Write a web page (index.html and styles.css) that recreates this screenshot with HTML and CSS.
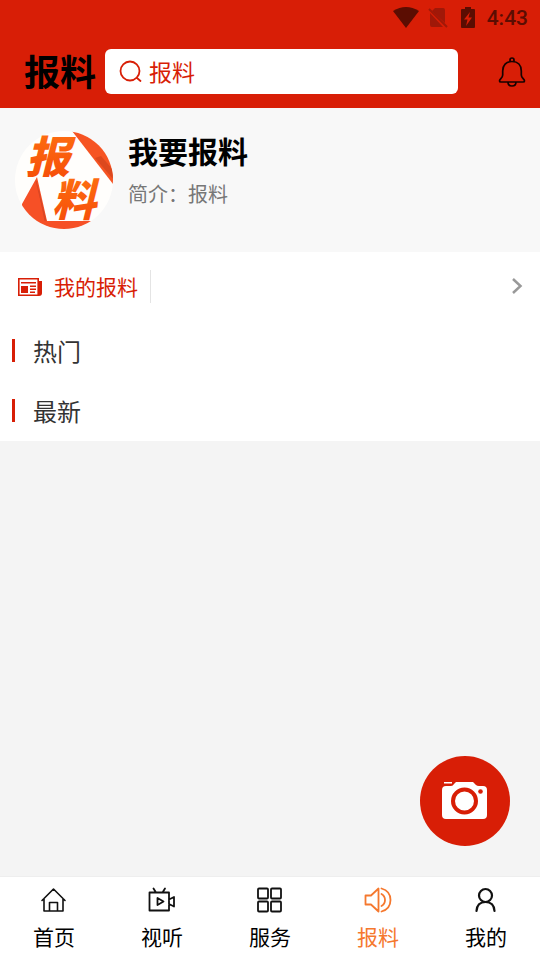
FILE: index.html
```html
<!DOCTYPE html>
<html lang="zh-CN">
<head>
<meta charset="utf-8">
<meta name="viewport" content="width=device-width, initial-scale=1">
<title>报料</title>
<link rel="stylesheet" href="styles.css">
</head>
<body>
<header class="header">
  <div class="status">
    <svg width="26" height="22" viewBox="0 0 26 22" fill="#5b0d02"><path d="M0 4Q13-4 26 4L13 21Z"/></svg>
    <svg class="sim" width="20" height="22" viewBox="0 0 20 22"><path d="M7 1H15Q17 1 17 3V16L4 4ZM2 6L15 20H4Q2 20 2 18Z" fill="#a01808"/><path d="M1 2L19 20" stroke="#a01808" stroke-width="2"/></svg>
    <svg class="battery" width="14" height="22" viewBox="0 0 14 22"><path d="M4 0H10V2H13Q14 2 14 3V20Q14 21 13 21H1Q0 21 0 20V3Q0 2 1 2H4Z" fill="#5b0d02"/><path d="M9 5L3 12.500H6.500L5 19 11 10.500H7.500Z" fill="#d81e06"/></svg>
    <time class="clock">4:43</time>
  </div>
  <div class="bar">
    <h1 class="brand">报料</h1>
    <label class="search">
      <svg width="24" height="24" viewBox="0 0 24 24" fill="none" stroke="#d81e06" stroke-width="1.800" stroke-linecap="round"><circle cx="11" cy="11" r="9.500"/><path d="M18 18L21.500 21"/></svg>
      <input class="search-input" type="text" value="报料" aria-label="搜索">
    </label>
    <button class="bell" type="button" aria-label="通知">
      <svg width="28" height="30" viewBox="0 0 28 30" fill="none" stroke="#160200" stroke-width="1.700" stroke-linejoin="round"><path d="M12 5V3Q12 1 14 1T16 3V5M14 4.500C8 4.500 4.700 8.500 4.700 14V18C4.700 21 1.500 22 1.500 24Q1.500 25 3 25H25Q26.500 25 26.500 24C26.500 22 23.300 21 23.300 18V14C23.300 8.500 20 4.500 14 4.500ZM10 25Q10 29 14 29T18 25"/></svg>
    </button>
  </div>
</header>
<main class="main">
  <section class="profile">
    <svg class="avatar" viewBox="0 0 98 98" role="img" aria-label="报料">
      <defs>
        <clipPath id="round"><circle cx="49" cy="49" r="49"/></clipPath>
        <linearGradient id="ink" x1="0" y1="0" x2="0" y2="1"><stop offset="0" stop-color="#ff7412"/><stop offset="1" stop-color="#f54a08"/></linearGradient>
      </defs>
      <g clip-path="url(#round)">
        <path d="M0 0H98V98H0Z" fill="#fffefc"/>
        <path d="M57 0L98 53V0Z" fill="#f65423"/>
        <path d="M80 27L86 25 98 39V48Z" fill="#dc481e"/>
        <path d="M22 46L7 73V98H98V90H32Z" fill="#f65026"/>
        <path d="M21 50L31 90M24 60L30 90" stroke="#d94725" fill="none"/>
      </g>
      <g class="avatar-text"><text x="11" y="42">报</text><text x="37" y="85">料</text></g>
    </svg>
    <div>
      <h2 class="name">我要报料</h2>
      <p class="intro">简介：报料</p>
    </div>
  </section>
  <section class="list">
    <a class="mine" href="#mine">
      <svg width="24" height="18" viewBox="0 0 24 18"><path d="M20 3H24V15Q24 18 21 18H18Z" fill="#d81e06"/><path d="M.8.800H20.200V17.200H.8Z" fill="#fff" stroke="#d81e06" stroke-width="1.600"/><path d="M3 8H10V15H3ZM3 4H18V5.500H3ZM12 7.500H18V9H12ZM12 10.500H18V12H12ZM12 13.500H17V15H12Z" fill="#d81e06"/></svg>
      <span class="mine-label">我的报料</span>
      <svg class="chevron" width="12" height="18" viewBox="0 0 12 18" fill="none" stroke="#999" stroke-width="2.500"><path d="M2 1L9.500 8 2 15"/></svg>
    </a>
    <h3 class="heading">热门</h3>
    <h3 class="heading">最新</h3>
  </section>
</main>
<button class="camera" type="button" aria-label="拍照报料">
  <svg width="46" height="38" viewBox="0 0 46 38"><path d="M2 0H10V1.500H2ZM4 4H9Q11 4 12 2L14 0H31L34 3Q35 4 37 4H41Q45 4 45 8V33Q45 37 41 37H4Q0 37 0 33V8Q0 4 4 4Z" fill="#fff"/><circle cx="22.500" cy="19" r="11.500" fill="none" stroke="#d81e06" stroke-width="4"/><circle cx="38.500" cy="9.500" r="2.300" fill="#d81e06"/></svg>
</button>
<nav class="tabs">
  <a class="tab" href="#home"><svg width="28" height="28" viewBox="0 0 28 28" fill="none" stroke="#111" stroke-width="1.600" stroke-linejoin="round" stroke-linecap="round"><path d="M2 14.500L13.500 3 25 14.500M4 12.500V25H23V12.500M9.500 25V16.500H17.500V25"/></svg>首页</a>
  <a class="tab" href="#video"><svg width="28" height="28" viewBox="0 0 28 28" fill="none" stroke="#111" stroke-width="1.800" stroke-linejoin="round" stroke-linecap="round"><path d="M1.500 6.500H21V24.500H1.500ZM5.500 2.500L8 6.500M17 2.500L14.500 6.500M9.500 12V19L15.500 15.500ZM21 13.500L26 11V20.500L21 18"/></svg>视听</a>
  <a class="tab" href="#service"><svg width="28" height="28" viewBox="0 0 28 28" fill="none" stroke="#111" stroke-width="1.800"><rect x="2" y="2.500" width="10" height="10" rx="1"/><rect x="15" y="2.500" width="10" height="10" rx="1"/><rect x="2" y="15.500" width="10" height="10" rx="1"/><rect x="15" y="15.500" width="10" height="10" rx="1"/></svg>服务</a>
  <a class="tab active" href="#report" aria-current="page"><svg width="28" height="28" viewBox="0 0 28 28" fill="none" stroke="#f5782e" stroke-width="1.800" stroke-linejoin="round" stroke-linecap="round"><path d="M1.500 9.500H7L14.500 2.500V25.500L7 18.500H1.500ZM17.500 8Q21 10 21 14T17.500 20M17.500 2.500Q26.500 5 26.500 14T17.500 25.500"/></svg>报料</a>
  <a class="tab" href="#me"><svg width="28" height="28" viewBox="0 0 28 28" fill="none" stroke="#111" stroke-width="2.200" stroke-linecap="round"><circle cx="13.500" cy="9.500" r="6.500"/><path d="M4.500 25Q5 16 13.500 16T22.500 25"/></svg>我的</a>
</nav>
</body>
</html>
```
FILE: styles.css
```css
* { box-sizing: border-box; }

body {
  margin: 0;
  min-height: 100vh;
  display: flex;
  flex-direction: column;
  background: #f4f4f4;
  color: #000;
  font-family: "Noto Sans CJK SC", sans-serif;
}

h1, h2, h3, p { margin: 0; }
a { color: inherit; text-decoration: none; }
svg { display: block; flex: none; }
button { border: 0; padding: 0; cursor: pointer; }

.header { background: #d81e06; padding-bottom: 14px; }

.status {
  height: 36px;
  padding-right: 12px;
  display: flex;
  justify-content: flex-end;
  align-items: center;
}
.sim { margin-left: 9px; }
.battery { margin: 0 12px 0 13px; }
.clock {
  color: #5b0d02;
  font: 500 21px/24px Roboto, sans-serif;
}

.bar {
  display: flex;
  align-items: center;
  margin-top: 13px;
  padding: 0 14px 0 24px;
}
.brand { padding-bottom: 3px; font-size: 36px; line-height: 42px; }
.search {
  flex: 1;
  min-width: 0;
  height: 45px;
  margin: 0 40px 0 9px;
  padding: 0 14px;
  display: flex;
  align-items: center;
  gap: 6px;
  background: #fff;
  border-radius: 6px;
}
.search-input {
  flex: 1;
  min-width: 0;
  border: 0;
  padding: 0 0 2px;
  outline: 0;
  background: none;
  color: #d81e06;
  font: 23px/34px "Noto Sans CJK SC", sans-serif;
}
.bell { background: none; }

.main { flex: 1; }

.profile {
  display: flex;
  gap: 15px;
  padding: 23px 15px;
  background: #f8f8f8;
}
.avatar { width: 98px; height: 98px; overflow: visible; }
.avatar-text {
  font-size: 44px;
  font-weight: 900;
  font-style: italic;
  fill: url(#ink);
}
.name { font-size: 30px; line-height: 38px; }
.intro { margin-top: 10px; font-size: 20px; line-height: 30px; color: #777; }

.list { background: #fff; }
.mine {
  height: 69px;
  padding: 0 17px 0 18px;
  display: flex;
  align-items: center;
  color: #d81e06;
}
.mine-label {
  margin-left: 12px;
  padding-right: 12px;
  border-right: 1px solid #e4e4e4;
  font-size: 21px;
  line-height: 33px;
}
.chevron { margin-left: auto; }

.heading {
  display: flex;
  align-items: center;
  gap: 18px;
  height: 60px;
  padding: 0 12px 2px;
  color: #333;
  font-size: 24px;
  font-weight: 400;
}
.heading::before {
  content: "";
  width: 3px;
  height: 23px;
  background: #d81e06;
}

.camera {
  position: fixed;
  right: 30px;
  bottom: 114px;
  width: 90px;
  height: 90px;
  border-radius: 50%;
  background: #d81e06;
  display: grid;
  place-items: center;
}

.tabs {
  position: sticky;
  bottom: 0;
  display: flex;
  background: #fff;
  border-top: 1px solid #eee;
}
.tab {
  flex: 1;
  display: flex;
  flex-direction: column;
  align-items: center;
  gap: 7px;
  padding: 9px 0 8px;
  font-size: 21px;
  line-height: 31px;
}
.active { color: #f5782e; }
```
